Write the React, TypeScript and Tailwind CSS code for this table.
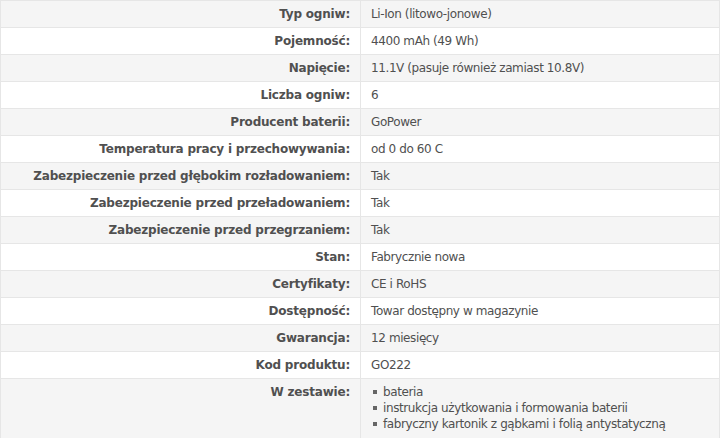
const rows: [string, string][] = [
  ['Typ ogniw:', 'Li-Ion (litowo-jonowe)'],
  ['Pojemność:', '4400 mAh (49 Wh)'],
  ['Napięcie:', '11.1V (pasuje również zamiast 10.8V)'],
  ['Liczba ogniw:', '6'],
  ['Producent baterii:', 'GoPower'],
  ['Temperatura pracy i przechowywania:', 'od 0 do 60 C'],
  ['Zabezpieczenie przed głębokim rozładowaniem:', 'Tak'],
  ['Zabezpieczenie przed przeładowaniem:', 'Tak'],
  ['Zabezpieczenie przed przegrzaniem:', 'Tak'],
  ['Stan:', 'Fabrycznie nowa'],
  ['Certyfikaty:', 'CE i RoHS'],
  ['Dostępność:', 'Towar dostępny w magazynie'],
  ['Gwarancja:', '12 miesięcy'],
  ['Kod produktu:', 'GO222'],
]

const kit = [
  'bateria',
  'instrukcja użytkowania i formowania baterii',
  'fabryczny kartonik z gąbkami i folią antystatyczną',
]

export default function App() {
  return (
    <div className="w-[720px] h-[438px] overflow-hidden bg-white text-[#505050] text-[12px] font-['DejaVu_Sans',sans-serif]">
      <table className="w-full border-collapse">
        <tbody>
          {rows.map(([label, value], i) => (
            <tr key={label} className={i % 2 === 0 ? 'bg-[#f5f5f5]' : 'bg-white'}>
              <th className="w-[360px] h-[27px] border border-[#e6e6e6] pr-[10px] text-right font-bold tracking-[-0.2px] align-middle">
                {label}
              </th>
              <td className="h-[27px] border border-[#e6e6e6] pl-[10px] tracking-[-0.4px] align-middle">{value}</td>
            </tr>
          ))}
          <tr className="bg-[#f5f5f5]">
            <th className="w-[360px] h-[60px] border border-[#e6e6e6] pr-[10px] pt-[5px] text-right font-bold tracking-[-0.2px] align-top leading-[16px]">
              W zestawie:
            </th>
            <td className="h-[60px] border border-[#e6e6e6] pl-[10px] pt-[5px] align-top tracking-[-0.4px]">
              <ul className="flex flex-col">
                {kit.map((item) => (
                  <li key={item} className="flex items-center gap-[6px] leading-[16px]">
                    <span className="w-[4px] h-[4px] bg-[#666] ml-[2px]" />
                    {item}
                  </li>
                ))}
              </ul>
            </td>
          </tr>
        </tbody>
      </table>
    </div>
  )
}
